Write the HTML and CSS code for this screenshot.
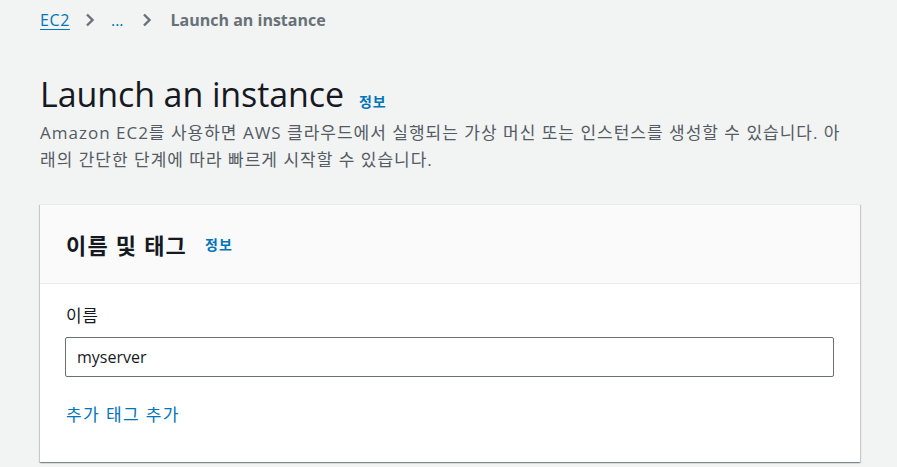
FILE: index.html
```html
<!DOCTYPE html>
<html lang="ko">
<head>
<meta charset="utf-8">
<link rel="stylesheet" href="styles.css">
</head>
<body>
<div class="page">
  <nav class="crumbs">
    <a class="crumb-link" href="#">EC2</a>
    <svg class="chev chev-1" viewBox="0 0 10 14" width="10" height="14"><path d="M2 1.5l5.5 5.5-5.5 5.5" fill="none" stroke="#687078" stroke-width="2.4"/></svg>
    <a class="crumb-dots" href="#">...</a>
    <svg class="chev chev-2" viewBox="0 0 10 14" width="10" height="14"><path d="M2 1.5l5.5 5.5-5.5 5.5" fill="none" stroke="#687078" stroke-width="2.4"/></svg>
    <span class="crumb-current">Launch an instance</span>
  </nav>
  <header class="head">
    <div class="title-row">
      <h1 class="title">Launch an instance</h1>
      <a class="info" href="#">정보</a>
    </div>
    <p class="desc">Amazon EC2를 사용하면 AWS 클라우드에서 실행되는 가상 머신 또는 인스턴스를 생성할 수 있습니다. 아래의 간단한 단계에 따라 빠르게 시작할 수 있습니다.</p>
  </header>
  <section class="card">
    <div class="card-head">
      <h2 class="card-title">이름 및 태그</h2>
      <a class="info" href="#">정보</a>
    </div>
    <div class="card-body">
      <label class="label">이름</label>
      <div class="input">myserver</div>
      <a class="add" href="#">추가 태그 추가</a>
    </div>
  </section>
</div>
</body>
</html>
```
FILE: styles.css
```css
* { box-sizing: border-box; }
html, body { margin: 0; padding: 0; }
body {
  background: #f2f3f3;
  font-family: "Open Sans", "Noto Sans CJK KR", sans-serif;
  color: #16191f;
  width: 897px;
  height: 467px;
  overflow: hidden;
}
.page { padding: 7px 37px 0 40px; }
.crumbs {
  display: flex;
  align-items: center;
  height: 26px;
  font-size: 16px;
}
.crumb-link {
  color: #0073bb;
  text-decoration: underline;
  text-underline-offset: 3px;
  letter-spacing: 0.6px;
}
.chev-1 { margin: 0 16px 0 15px; }
.chev-2 { margin: 0 19px 0 18px; }
.crumb-dots { color: #0073bb; text-decoration: none; }
.crumb-current { color: #687078; font-weight: 700; }
.head { margin-top: 41px; }
.title-row { display: flex; align-items: baseline; gap: 15px; }
.title {
  margin: 0;
  font-size: 34px;
  font-weight: 400;
  line-height: 40px;
  color: #16191f;
  letter-spacing: -0.1px;
}
.info {
  color: #0073bb;
  font-size: 14px;
  font-weight: 700;
  letter-spacing: 1px;
  text-decoration: none;
}
.desc {
  margin: 5px 0 0;
  padding-right: 14px;
  font-size: 17px;
  line-height: 27px;
  letter-spacing: 1px;
  color: #545b64;
}
.card {
  margin-top: 31px;
  background: #fff;
  box-shadow: 0 1px 1px 0 rgba(0,28,36,.3), 1px 1px 1px 0 rgba(0,28,36,.15), -1px 1px 1px 0 rgba(0,28,36,.15);
  border-top: 1px solid #eaeded;
}
.card-head {
  background: #fafafa;
  border-bottom: 1px solid #eaeded;
  height: 79px;
  padding: 0 26px;
  display: flex;
  align-items: center;
  gap: 18px;
}
.card-title {
  margin: 0;
  font-size: 22px;
  font-weight: 700;
  letter-spacing: 1.2px;
  color: #16191f;
}
.card-body { padding: 20px 26px 35px 25px; }
.label {
  display: block;
  font-size: 17px;
  line-height: 24px;
  letter-spacing: 0.5px;
  color: #16191f;
  padding-left: 1px;
}
.input {
  margin-top: 9px;
  height: 40px;
  border: 1px solid #687078;
  border-radius: 2px;
  padding: 0 11px;
  display: flex;
  align-items: center;
  font-size: 16px;
  color: #16191f;
}
.add {
  display: block;
  margin-top: 26px;
  padding-left: 1px;
  font-size: 17px;
  line-height: 24px;
  letter-spacing: 1.4px;
  color: #0073bb;
  text-decoration: none;
}
```
